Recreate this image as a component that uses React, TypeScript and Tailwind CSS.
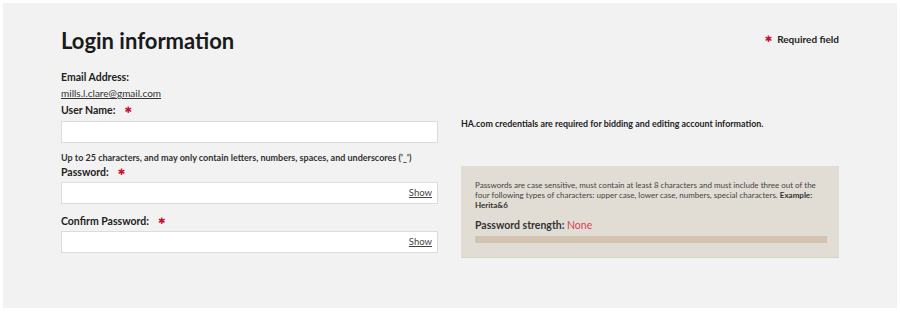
export default function App() {
  const font = { fontFamily: 'Lato, "Open Sans", sans-serif' };
  return (
    <div className="w-[900px] h-[316px] bg-white pt-[3px] px-[3px]" style={font}>
      <div className="h-[305px] bg-[#f2f2f2] pl-[58px] pr-[58px] pt-[24px] flex gap-[23px] text-[#222]">
        {/* left column */}
        <div className="w-[377px] flex flex-col">
          <h1 className="text-[22px] font-bold leading-[28px] text-[#1a1a1a]">Login information</h1>
          <div className="mt-[15px] text-[10.5px] font-bold leading-[14px]">Email Address:</div>
          <a className="mt-[2px] text-[10px] leading-[14px] underline text-[#333]">mills.l.clare@gmail.com</a>
          <Label text="User Name:" className="mt-[3px]" />
          <input className="mt-[4px] h-[22px] w-full bg-white border border-[#dcdcdc] outline-none" />
          <div className="mt-[8px] text-[9px] font-bold leading-[13px] text-[#333]">
            Up to 25 characters, and may only contain letters, numbers, spaces, and underscores ('_')
          </div>
          <Label text="Password:" className="mt-[1px]" />
          <PwField className="mt-[3px]" />
          <Label text="Confirm Password:" className="mt-[10px]" />
          <PwField className="mt-[3px]" />
        </div>
        {/* right column */}
        <div className="flex-1 flex flex-col">
          <div className="flex justify-end items-center gap-[5px] mt-[5px] text-[10px] font-bold leading-[14px]">
            <Star />
            <span>Required field</span>
          </div>
          <div className="mt-[72px] text-[8.9px] font-bold leading-[12px] text-[#222]">
            HA.com credentials are required for bidding and editing account information.
          </div>
          <div className="mt-[36px] bg-[#e1ddd4] border-b border-[#d8d3c9] pl-[14px] pr-[12px] pt-[14px] pb-[14px]">
            <p className="text-[8px] leading-[10px] text-[#444]">
              Passwords are case sensitive, must contain at least 8 characters and must include three out of the four following types of characters: upper case, lower case, numbers, special characters. <b className="text-[#333]">Example: Herita&amp;6</b>
            </p>
            <div className="mt-[9px] text-[10.5px] font-bold leading-[13px] text-[#333]">
              Password strength: <span className="font-normal text-[#d9434f]">None</span>
            </div>
            <div className="mt-[4px] h-[7px] bg-[#d3c4b1]" />
          </div>
        </div>
      </div>
    </div>
  );
}

function Star() {
  return (
    <span
      className="text-[#c8102e] text-[9px] leading-none"
      style={{ fontFamily: '"DejaVu Sans", sans-serif' }}
    >
      ✱
    </span>
  );
}

function Label({ text, className = '' }: { text: string; className?: string }) {
  return (
    <div className={`${className} flex items-center gap-[9px] text-[10.5px] font-bold leading-[14px] text-[#222]`}>
      <span>{text}</span>
      <Star />
    </div>
  );
}

function PwField({ className = '' }: { className?: string }) {
  return (
    <div className={`${className} h-[22px] w-full bg-white border border-[#dcdcdc] flex items-center justify-end pr-[5px]`}>
      <span className="text-[9.5px] underline text-[#444]">Show</span>
    </div>
  );
}
